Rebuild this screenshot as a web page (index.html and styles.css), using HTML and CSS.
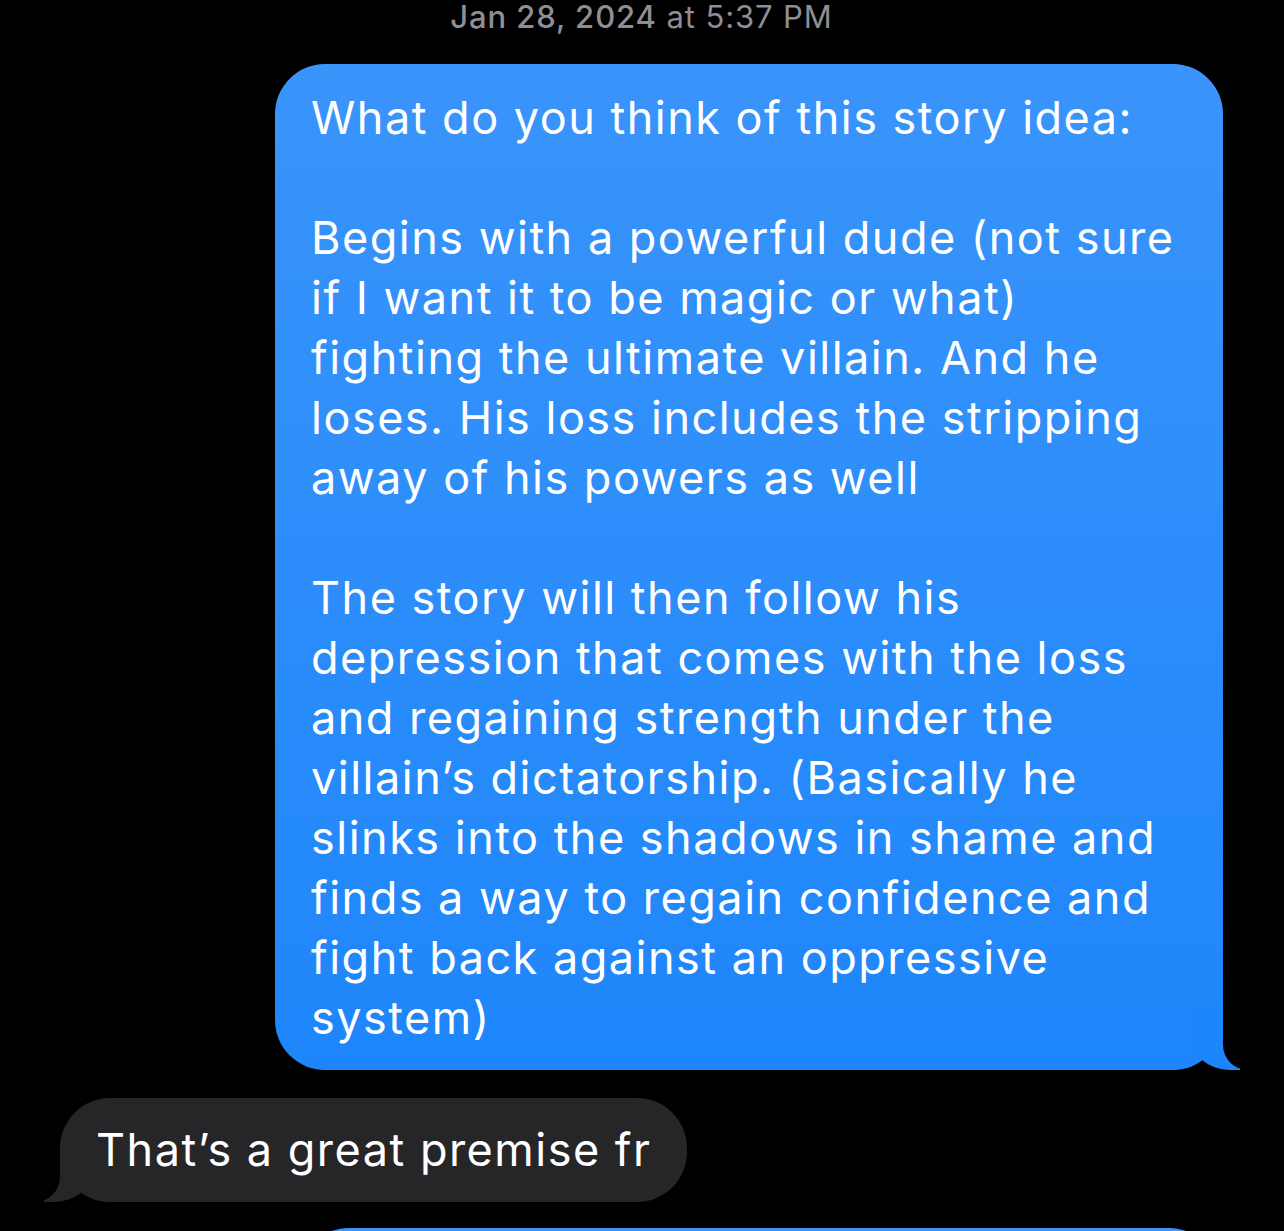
FILE: index.html
```html
<!DOCTYPE html>
<html lang="en">
<head>
  <meta charset="UTF-8" />
  <meta name="viewport" content="width=device-width, initial-scale=1.0"/>
  <title>Messages</title>
  <link rel="stylesheet" href="styles.css">
</head>
<body>
  <div class="thread">
    <div class="stamp"><strong>Jan 28, 2024</strong> at 5:37 PM</div>

    <div class="msg sent">What do you think of this story idea:

Begins with a powerful dude (not sure if I want it to be magic or what) fighting the ultimate villain. And he loses. His loss includes the stripping away of his powers as well

The story will then follow his depression that comes with the loss and regaining strength under the villain’s dictatorship. (Basically he slinks into the shadows in shame and finds a way to regain confidence and fight back against an oppressive system)</div>

    <div class="msg received">That’s a great premise fr</div>

    <div class="msg sent next"></div>
  </div>
</body>
</html>
```

FILE: styles.css
```css
body {
  margin: 0;
  padding: 0;
  background: #000;
  font-family: 'Inter', 'Noto Sans', sans-serif;
  color: #fff;
  overflow: hidden;
}

.thread {
  display: flex;
  flex-direction: column;
  padding: 0 61px 0 60px;
}

.stamp {
  text-align: center;
  color: #8e8e93;
  font-size: 31px;
  letter-spacing: 0.9px;
  line-height: 34px;
  height: 64px;
}

.stamp strong {
  font-weight: 500;
}

.msg {
  position: relative;
  font-size: 45px;
  letter-spacing: 1.5px;
  line-height: 60px;
  white-space: pre-line;
  border-radius: 50px;
  padding: 24px 38px 22px 36px;
  box-sizing: border-box;
}

.msg::before,
.msg::after {
  content: '';
  position: absolute;
  bottom: 0;
  height: 60px;
}

.sent {
  align-self: flex-end;
  width: 948px;
  background: linear-gradient(180deg, #3a94fa, #1e86fb);
}

.sent::before {
  right: -17px;
  width: 50px;
  background: #1e86fb;
  border-bottom-left-radius: 40px 35px;
}

.sent::after {
  right: -60px;
  width: 60px;
  background: #000;
  border-bottom-left-radius: 25px;
}

.received {
  align-self: flex-start;
  background: #262629;
  margin-top: 28px;
  padding: 22px 36px 22px 36px;
}

.received::before {
  left: -16px;
  width: 50px;
  background: #262629;
  border-bottom-right-radius: 40px 35px;
}

.received::after {
  left: -60px;
  width: 60px;
  background: #000;
  border-bottom-right-radius: 25px;
}

.next {
  margin-top: 26px;
  width: 920px;
  margin-right: 4px;
  height: 120px;
}
```
